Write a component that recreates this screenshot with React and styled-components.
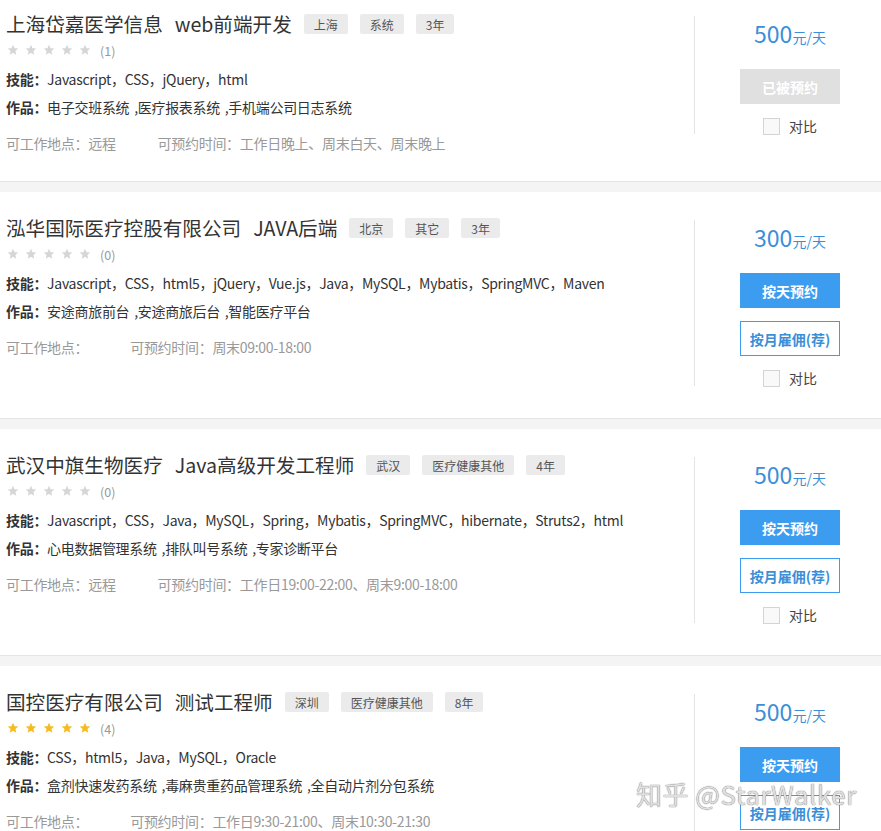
import React from 'react'
import styled, { createGlobalStyle } from 'styled-components'

const GlobalStyle = createGlobalStyle`
  html, body {
    margin: 0;
    padding: 0;
    overflow: hidden;
    background: #ffffff;
    font-family: "Noto Sans CJK SC", "Noto Sans", sans-serif;
    color: #333;
  }
`

const Page = styled.div`
  width: 100%;
  margin-top: -12px;
  background: #f4f4f4;
  display: flex;
  flex-direction: column;
  gap: 10px;
`

const Card = styled.div`
  display: flex;
  align-items: flex-start;
  background: #ffffff;
  border-bottom: 1px solid #e4e4e4;
  padding: 22px 0 28px 6px;
`

const Info = styled.div`
  flex: 1;
  display: flex;
  flex-direction: column;
`

const TitleRow = styled.div`
  display: flex;
  align-items: center;
  height: 28px;
`

const Title = styled.h3`
  margin: 0 12px 0 0;
  font-size: 19.6px;
  font-weight: 400;
  color: #333;
  line-height: 28px;
  white-space: nowrap;
  span + span {
    margin-left: 12px;
  }
`

const Tag = styled.span`
  display: inline-flex;
  align-items: center;
  height: 20px;
  padding: 0 10px;
  margin-right: 12px;
  background: #ebebeb;
  border-radius: 2px;
  font-size: 12px;
  color: #555;
`

const StarRow = styled.div`
  display: flex;
  align-items: center;
  height: 16px;
  margin-top: 4px;
  padding-left: 1px;
  gap: 6px;
  font-size: 12.5px;
  color: #999;
`

const Count = styled.span`
  margin-left: 3px;
`

const Line = styled.div`
  margin-top: ${(p) => p.$gap}px;
  line-height: 20px;
  font-size: 14px;
  letter-spacing: -0.3px;
  word-spacing: 2px;
  color: ${(p) => (p.$muted ? '#999' : '#333')};
  white-space: nowrap;
  b {
    font-weight: 700;
    color: #333;
  }
`

const Place = styled.span`
  margin-right: 42px;
`

const Side = styled.div`
  width: 182px;
  flex-shrink: 0;
  margin-top: 6px;
  margin-bottom: 4px;
  border-left: 1px solid #e4e4e4;
  display: flex;
  flex-direction: column;
  align-items: center;
  padding: 2px 0 0 4px;
`

const Price = styled.div`
  line-height: 30px;
  color: #3b8fd8;
  font-size: 14px;
  strong {
    font-size: 23px;
    font-weight: 400;
  }
`

const Button = styled.button`
  width: 100px;
  height: 35px;
  margin-top: ${(p) => p.$gap}px;
  border: 1px solid ${(p) => (p.$variant === 'done' ? '#e0e0e0' : '#3c9cf0')};
  background: ${(p) =>
    p.$variant === 'solid' ? '#3c9cf0' : p.$variant === 'done' ? '#e0e0e0' : '#ffffff'};
  color: ${(p) => (p.$variant === 'outline' ? '#3b8fd8' : '#ffffff')};
  font-family: inherit;
  font-size: 14px;
  font-weight: 700;
  padding: 0;
  cursor: pointer;
`

const Compare = styled.label`
  display: flex;
  align-items: center;
  margin-top: 14px;
  height: 16px;
  font-size: 14px;
  color: #444;
  gap: 9px;
`

const Box = styled.span`
  width: 15px;
  height: 15px;
  border: 1px solid #d4d4d4;
  background: #f9f9f9;
`

const Watermark = styled.div`
  position: fixed;
  left: 636px;
  top: 775px;
  font-size: 26px;
  letter-spacing: 0.5px;
  color: rgba(242, 242, 242, 0.85);
  text-shadow: 0 0 1px #777, 0 0 1px #777;
  font-family: "Noto Sans CJK SC", "Liberation Sans", sans-serif;
  pointer-events: none;
  white-space: nowrap;
`

function Star({ on }) {
  return (
    <svg width="12" height="12" viewBox="0 0 24 24">
      <polygon
        points="12,1.5 15.1,8.3 22.5,9.1 16.9,14.1 18.5,21.5 12,17.7 5.5,21.5 7.1,14.1 1.5,9.1 8.9,8.3"
        fill={on ? '#f5bb1f' : '#d6d6d6'}
      />
    </svg>
  )
}

const people = [
  {
    company: '上海岱嘉医学信息',
    role: 'web前端开发',
    tags: ['上海', '系统', '3年'],
    stars: 0,
    count: 1,
    skills: 'Javascript，CSS，jQuery，html',
    works: '电子交班系统 ,医疗报表系统 ,手机端公司日志系统',
    place: '远程',
    time: '工作日晚上、周末白天、周末晚上',
    price: 500,
    booked: true,
  },
  {
    company: '泓华国际医疗控股有限公司',
    role: 'JAVA后端',
    tags: ['北京', '其它', '3年'],
    stars: 0,
    count: 0,
    skills: 'Javascript，CSS，html5，jQuery，Vue.js，Java，MySQL，Mybatis，SpringMVC，Maven',
    works: '安途商旅前台 ,安途商旅后台 ,智能医疗平台',
    place: '',
    time: '周末09:00-18:00',
    price: 300,
  },
  {
    company: '武汉中旗生物医疗',
    role: 'Java高级开发工程师',
    tags: ['武汉', '医疗健康其他', '4年'],
    stars: 0,
    count: 0,
    skills: 'Javascript，CSS，Java，MySQL，Spring，Mybatis，SpringMVC，hibernate，Struts2，html',
    works: '心电数据管理系统 ,排队叫号系统 ,专家诊断平台',
    place: '远程',
    time: '工作日19:00-22:00、周末9:00-18:00',
    price: 500,
  },
  {
    company: '国控医疗有限公司',
    role: '测试工程师',
    tags: ['深圳', '医疗健康其他', '8年'],
    stars: 5,
    count: 4,
    skills: 'CSS，html5，Java，MySQL，Oracle',
    works: '盒剂快速发药系统 ,毒麻贵重药品管理系统 ,全自动片剂分包系统',
    place: '',
    time: '工作日9:30-21:00、周末10:30-21:30',
    price: 500,
  },
]

function PersonCard({ p }) {
  return (
    <Card>
      <Info>
        <TitleRow>
          <Title>
            <span>{p.company}</span>
            <span>{p.role}</span>
          </Title>
          {p.tags.map((t) => (
            <Tag key={t}>{t}</Tag>
          ))}
        </TitleRow>
        <StarRow>
          {[0, 1, 2, 3, 4].map((i) => (
            <Star key={i} on={i < p.stars} />
          ))}
          <Count>({p.count})</Count>
        </StarRow>
        <Line $gap={11}>
          <b>技能：</b>
          {p.skills}
        </Line>
        <Line $gap={8}>
          <b>作品：</b>
          {p.works}
        </Line>
        <Line $gap={16} $muted>
          <Place>可工作地点：{p.place}</Place>
          可预约时间：{p.time}
        </Line>
      </Info>
      <Side>
        <Price>
          <strong>{p.price}</strong>元/天
        </Price>
        {p.booked ? (
          <Button $variant="done" $gap={17}>已被预约</Button>
        ) : (
          <>
            <Button $variant="solid" $gap={17}>按天预约</Button>
            <Button $variant="outline" $gap={13}>按月雇佣(荐)</Button>
          </>
        )}
        <Compare>
          <Box />
          对比
        </Compare>
      </Side>
    </Card>
  )
}

export default function App() {
  return (
    <>
      <GlobalStyle />
      <Page>
        {people.map((p) => (
          <PersonCard key={p.company} p={p} />
        ))}
      </Page>
      <Watermark>知乎 @StarWalker</Watermark>
    </>
  )
}
